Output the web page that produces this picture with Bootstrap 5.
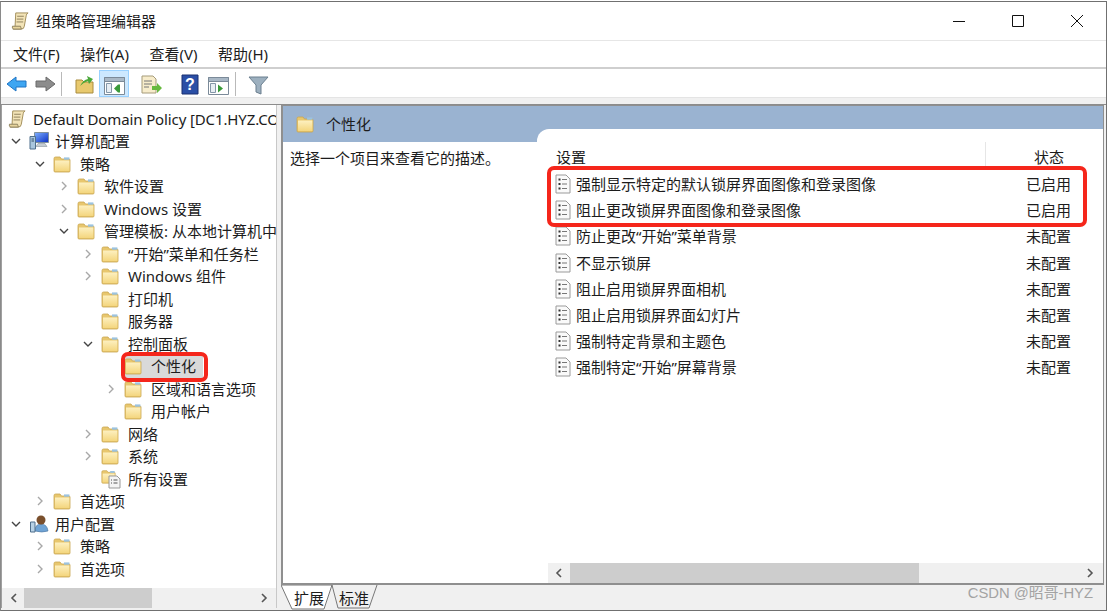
<!DOCTYPE html>
<html lang="zh-CN">
<head>
<meta charset="utf-8">
<title>组策略管理编辑器</title>
<link href="https://cdn.jsdelivr.net/npm/bootstrap@5.3.0/dist/css/bootstrap.min.css" rel="stylesheet">
<style>
html,body{height:100%;margin:0;overflow:hidden;background:#fff}
body{font-family:"Noto Sans","Noto Sans CJK SC",sans-serif;font-size:15px;color:#1c1c1c;line-height:1.2}
.gwin{height:610px;width:1107px;margin-top:1px;border:1px solid #707070;border-left-color:#8a8a8a;position:relative;background:#fff}
.gtitle{height:39px;padding-left:10px;border-bottom:1px solid #e6e6e6;flex:none}
.gwinbtns{margin-left:auto}
.gwinbtn{width:59px;height:38px}
.gmenu{height:28px;flex:none;padding:0 0 1px 12px;gap:20.5px;border-bottom:2px solid #cfcfcf}
.gtool{height:28px;flex:none;position:relative}
.gtool svg{position:absolute;top:6px}
.gsep{position:absolute;top:3px;height:24px;width:1px;background:#b9b9b9}
.gact{position:absolute;left:98px;top:1px;width:30px;height:27px;background:#cce8ff;border:1px solid #99d1ff}
.gstrip{height:7px;flex:none;background:#f0f0f0;border-top:1px solid #e4e4e4}
.gmain{flex:1 1 auto;min-height:0;background:#f0f0f0;border-top:1px solid #8c8c8c}
.gleft{width:276px;flex:none;background:#fff;border-left:1px solid #a0a0a0;border-right:1px solid #c8c8c8;margin-bottom:2px}
.gtree{flex:1 1 auto;min-height:0;overflow:hidden;padding-top:2.5px;padding-left:1px}
.grow{height:22.5px;white-space:nowrap;position:relative}
.gcv{width:10px;height:10px;flex:none;margin-right:8px}
.gic{flex:none;margin-right:6px}
.gtx{margin-left:3px;position:relative}
.lv0{padding-left:8px}
.lv1{padding-left:32px}
.lv2{padding-left:56px}
.lv3{padding-left:80px}
.lv4{padding-left:103px}
.groot{padding-left:5px;letter-spacing:-.12px}
.gsb{height:20px;background:#f0f0f0;flex:none;position:relative}
.gsb i{position:absolute;top:0;bottom:0;background:#cdcdcd}
.gsb svg{position:absolute;top:5px}
.gright{margin-left:4px;width:823px;flex:none}
.gpane{flex:1 1 auto;min-height:0;background:#fff;border:2px solid #8f8f8f;border-top-width:1px;border-right-width:1px}
.ghead{height:36px;background:#9ab3d1;flex:none;padding:0 0 0 13px}
.ghead span{margin-left:12px}
.gbody{flex:1 1 auto;min-height:0}
.gdesc{width:254px;flex:none;padding:7px 0 0 7px}
.gpanel{flex:1 1 auto;min-width:0;margin-top:-13px;background:#fff;border-top-left-radius:12px}
.gcols{height:42px;flex:none;padding:19px 0 0 19px;position:relative}
.gcols .gst{position:absolute;left:497px;top:19px}
.gcols b{position:absolute;left:448px;top:13px;height:28px;width:1px;background:#e6e6e6}
.gitems{flex:1 1 auto;min-height:0;padding-left:18px}
.gitem{height:26.2px;position:relative}
.gitem svg{margin-right:5px;flex:none}
.gstat{position:absolute;left:471px}
.gpanel .gsb{margin-left:11px}
.gtabs{height:25px;flex:none;position:relative;padding-left:13px;gap:15px}
.gtabs svg{position:absolute;left:0;top:0}
.gtabs span{position:relative}
.gmark{position:absolute;color:#a3a3a3;font-family:"Liberation Sans","Noto Sans CJK SC",sans-serif;font-size:14.8px;right:13px;top:583px}
.gred{position:absolute;border:4px solid #f5261b;border-radius:7px}
.gr1{left:546px;top:164px;width:540px;height:61px}
.gr2{left:120px;top:350px;width:87px;height:30px}
.gsel{position:absolute;left:120px;top:0;width:80px;height:22.5px;background:#d9d9d9}
.gup{position:relative}
</style>
</head>
<body>
<svg width="0" height="0" class="position-absolute">
<defs>
<linearGradient id="fg" x1="0" y1="0" x2="0" y2="1"><stop offset="0" stop-color="#fdf0c0"/><stop offset="1" stop-color="#f4d67e"/></linearGradient>
<linearGradient id="sg" x1="0" y1="0" x2="1" y2="1"><stop offset="0" stop-color="#7fb0ff"/><stop offset="1" stop-color="#0a2fc4"/></linearGradient>
<symbol id="fold" viewBox="0 0 18 18"><path d="M1 3.500Q1 2 2.500 2H7l1.500 2H16q1 0 1 1v11q0 1-1 1H2q-1 0-1-1z" fill="#e8c76e" stroke="#c9a650" stroke-width=".8"/><path d="M2 5.500h14.400V16H2z" fill="url(#fg)"/><path d="M11 2.400h5.400v2.300H11z" fill="#9cc3e0"/></symbol>
<symbol id="scroll" viewBox="0 0 20 20"><path d="M5 1.500h13q-2 1-2 3l-2 11q-.4 3-3 3H2q2-.8 2.300-3z" fill="#f3e4b8" stroke="#a08c58"/><path d="M1.500 15.500h8.500q.5 2 1 3H2.500q-1.500-1-1-3zM6.500 5h7M6 8h7M5.800 11h7" fill="#e8d59c" stroke="#8d7f5c"/></symbol>
<symbol id="doc" viewBox="0 0 16 20"><path d="M1 1h10l4 4v14H1z" fill="#fafafa" stroke="#9a9a9a"/><path d="M3.500 5.500h2M3.500 10h2M3.500 14.500h2" stroke="#333" stroke-width="2"/><path d="M7 5.500h5M7 10h5M7 14.500h5" stroke="#777"/></symbol>
<symbol id="cr" viewBox="0 0 10 10"><path d="M3 1l4 4-4 4" fill="none" stroke="#a8a8a8" stroke-width="1.400"/></symbol>
<symbol id="cd" viewBox="0 0 10 10"><path d="M1 3l4 4 4-4" fill="none" stroke="#444" stroke-width="1.400"/></symbol>
<symbol id="win" viewBox="0 0 21 18"><path d="M.5 .5h20v17H.5z" fill="#fff" stroke="#7b8a99"/><path d="M.5 .5h20v4H.5z" fill="#a9b8c6" stroke="#7b8a99"/><path d="M2.500 6.500h5v9h-5z" fill="#e8eef3" stroke="#8497a8"/></symbol>
</defs>
</svg>
<div class="gwin d-flex flex-column">
  <div class="gtitle d-flex align-items-center">
    <svg class="gic" width="19" height="20"><use href="#scroll"/></svg><span>组策略管理编辑器</span>
    <div class="gwinbtns d-flex">
      <div class="gwinbtn d-flex align-items-center justify-content-center"><svg width="12" height="12"><path d="M0 6.500h12" stroke="#111"/></svg></div>
      <div class="gwinbtn d-flex align-items-center justify-content-center"><svg width="12" height="12"><path d="M.5.500h11v11H.5z" fill="none" stroke="#111"/></svg></div>
      <div class="gwinbtn d-flex align-items-center justify-content-center"><svg width="12" height="12"><path d="M0 0l12 12M12 0L0 12" stroke="#111"/></svg></div>
    </div>
  </div>
  <div class="gmenu d-flex align-items-center"><span>文件(F)</span><span>操作(A)</span><span>查看(V)</span><span>帮助(H)</span></div>
  <div class="gtool">
    <svg style="left:5px" width="21" height="18"><path d="M1 9l9-7v4h10v6H10v4z" fill="#3ea6f2" stroke="#1f74c4"/></svg>
    <svg style="left:34px" width="21" height="18"><path d="M20 9l-9-7v4H1v6h10v4z" fill="#8c8c8c" stroke="#6a6a6a"/></svg>
    <i class="gsep" style="left:60px"></i>
    <svg style="left:74px" width="19" height="19"><path d="M1 5h6l2 2h9v11H1z" fill="#e8c96e" stroke="#a98c3e"/><path d="M5 11q3-6 8-7l-1-3 6 3-4 5-1-3q-4 1-8 5z" fill="#4aa83a"/></svg>
    <i class="gact"></i>
    <svg style="left:103px;top:8px" width="21" height="18"><use href="#win"/><path d="M16 7.500h-2l-4 4 4 4h2z" fill="#3a9a3a"/></svg>
    <svg style="left:140px" width="22" height="20"><path d="M1 1h11l3 3v14H1z" fill="#f7eccb" stroke="#a59b7a"/><path d="M3 6h8M3 9h8M3 12h5" stroke="#777"/><path d="M11 11h5V8l5 5-5 5v-3h-5z" fill="#67b93e"/></svg>
    <svg style="left:180px;top:5px" width="18" height="21"><path d="M1 1h16v19H1z" fill="#2a4fa6" stroke="#1a3170"/><text x="9" y="16" text-anchor="middle" font-size="16" font-weight="700" font-family="Liberation Sans" fill="#fff">?</text></svg>
    <svg style="left:207px;top:8px" width="21" height="18"><use href="#win"/><path d="M10 7.500v8l5-4z" fill="#3a9a3a"/></svg>
    <i class="gsep" style="left:234px"></i>
    <svg style="left:247px;top:7px" width="21" height="19"><path d="M1 1h19l-7 8v9l-5-2V9z" fill="#9db0bf" stroke="#6b7f8f"/></svg>
  </div>
  <div class="gstrip"></div>
  <div class="gmain d-flex">
    <div class="gleft d-flex flex-column">
      <div class="gtree">
        <div class="grow d-flex align-items-center groot"><svg class="gic" width="19" height="20"><use href="#scroll"/></svg><span>Default Domain Policy [DC1.HYZ.CO</span></div>
        <div class="grow d-flex align-items-center lv0"><svg class="gcv"><use href="#cd"/></svg><svg class="gic" width="20" height="20"><path d="M5.500 1.500h14v10h-14z" fill="url(#sg)" stroke="#7f8f9c"/><path d="M9 12.500h7l2 3H7z" fill="#c4ccd2" stroke="#8a96a0" stroke-width=".6"/><path d="M1 5.500h5.500v12.500H1z" fill="#a9c6dd" stroke="#4f6f8c"/><path d="M2.500 8h2.500M2.500 10h2.500" stroke="#35506a"/></svg><span>计算机配置</span></div>
        <div class="grow d-flex align-items-center lv1"><svg class="gcv"><use href="#cd"/></svg><svg class="gic" width="18" height="18"><use href="#fold"/></svg><span class="gtx">策略</span></div>
        <div class="grow d-flex align-items-center lv2"><svg class="gcv"><use href="#cr"/></svg><svg class="gic" width="18" height="18"><use href="#fold"/></svg><span class="gtx">软件设置</span></div>
        <div class="grow d-flex align-items-center lv2"><svg class="gcv"><use href="#cr"/></svg><svg class="gic" width="18" height="18"><use href="#fold"/></svg><span class="gtx">Windows 设置</span></div>
        <div class="grow d-flex align-items-center lv2"><svg class="gcv"><use href="#cd"/></svg><svg class="gic" width="18" height="18"><use href="#fold"/></svg><span class="gtx">管理模板: 从本地计算机中</span></div>
        <div class="grow d-flex align-items-center lv3"><svg class="gcv"><use href="#cr"/></svg><svg class="gic" width="18" height="18"><use href="#fold"/></svg><span class="gtx">“开始”菜单和任务栏</span></div>
        <div class="grow d-flex align-items-center lv3"><svg class="gcv"><use href="#cr"/></svg><svg class="gic" width="18" height="18"><use href="#fold"/></svg><span class="gtx">Windows 组件</span></div>
        <div class="grow d-flex align-items-center lv3"><span class="gcv"></span><svg class="gic" width="18" height="18"><use href="#fold"/></svg><span class="gtx">打印机</span></div>
        <div class="grow d-flex align-items-center lv3"><span class="gcv"></span><svg class="gic" width="18" height="18"><use href="#fold"/></svg><span class="gtx">服务器</span></div>
        <div class="grow d-flex align-items-center lv3"><svg class="gcv"><use href="#cd"/></svg><svg class="gic" width="18" height="18"><use href="#fold"/></svg><span class="gtx">控制面板</span></div>
        <div class="grow d-flex align-items-center lv4"><i class="gsel"></i><span class="gcv"></span><svg class="gic gup" width="18" height="18"><use href="#fold"/></svg><span class="gtx">个性化</span></div>
        <div class="grow d-flex align-items-center lv4"><svg class="gcv"><use href="#cr"/></svg><svg class="gic" width="18" height="18"><use href="#fold"/></svg><span class="gtx">区域和语言选项</span></div>
        <div class="grow d-flex align-items-center lv4"><span class="gcv"></span><svg class="gic" width="18" height="18"><use href="#fold"/></svg><span class="gtx">用户帐户</span></div>
        <div class="grow d-flex align-items-center lv3"><svg class="gcv"><use href="#cr"/></svg><svg class="gic" width="18" height="18"><use href="#fold"/></svg><span class="gtx">网络</span></div>
        <div class="grow d-flex align-items-center lv3"><svg class="gcv"><use href="#cr"/></svg><svg class="gic" width="18" height="18"><use href="#fold"/></svg><span class="gtx">系统</span></div>
        <div class="grow d-flex align-items-center lv3"><span class="gcv"></span><svg class="gic" width="20" height="20"><use href="#fold" width="15" height="15"/><path d="M8 7h8l3 3v9H8z" fill="#f4f4f4" stroke="#999"/><path d="M10 11h1M10 14h1M12.500 11h4M12.500 14h4" stroke="#555"/></svg><span class="gtx" style="margin-left:1px">所有设置</span></div>
        <div class="grow d-flex align-items-center lv1"><svg class="gcv"><use href="#cr"/></svg><svg class="gic" width="18" height="18"><use href="#fold"/></svg><span class="gtx">首选项</span></div>
        <div class="grow d-flex align-items-center lv0"><svg class="gcv"><use href="#cd"/></svg><svg class="gic" width="20" height="20"><path d="M6 17q0-7 6-7t7 7q-6 2-13 0z" fill="#6fa3d4" stroke="#44719c" stroke-width=".6"/><circle cx="12" cy="6" r="4.500" fill="#7a4f2c"/><path d="M1.500 8h4.500v10H1.500z" fill="#b8d2e6" stroke="#4f6f8c"/></svg><span>用户配置</span></div>
        <div class="grow d-flex align-items-center lv1"><svg class="gcv"><use href="#cr"/></svg><svg class="gic" width="18" height="18"><use href="#fold"/></svg><span class="gtx">策略</span></div>
        <div class="grow d-flex align-items-center lv1"><svg class="gcv"><use href="#cr"/></svg><svg class="gic" width="18" height="18"><use href="#fold"/></svg><span class="gtx">首选项</span></div>
      </div>
      <div class="gsb"><i style="left:22px;width:128px"></i><svg style="left:7px" width="10" height="10"><path d="M7 1L3 5l4 4" fill="none" stroke="#555" stroke-width="1.600"/></svg><svg style="left:257px" width="10" height="10"><path d="M3 1l4 4-4 4" fill="none" stroke="#555" stroke-width="1.600"/></svg></div>
    </div>
    <div class="gright d-flex flex-column">
      <div class="gpane d-flex flex-column">
        <div class="ghead d-flex align-items-center"><svg width="18" height="18"><use href="#fold"/></svg><span>个性化</span></div>
        <div class="gbody d-flex">
          <div class="gdesc">选择一个项目来查看它的描述。</div>
          <div class="gpanel d-flex flex-column">
            <div class="gcols"><span>设置</span><b></b><span class="gst">状态</span></div>
            <div class="gitems">
              <div class="gitem d-flex align-items-center"><svg width="16" height="20"><use href="#doc"/></svg><span>强制显示特定的默认锁屏界面图像和登录图像</span><span class="gstat">已启用</span></div>
              <div class="gitem d-flex align-items-center"><svg width="16" height="20"><use href="#doc"/></svg><span>阻止更改锁屏界面图像和登录图像</span><span class="gstat">已启用</span></div>
              <div class="gitem d-flex align-items-center"><svg width="16" height="20"><use href="#doc"/></svg><span>防止更改“开始”菜单背景</span><span class="gstat">未配置</span></div>
              <div class="gitem d-flex align-items-center"><svg width="16" height="20"><use href="#doc"/></svg><span>不显示锁屏</span><span class="gstat">未配置</span></div>
              <div class="gitem d-flex align-items-center"><svg width="16" height="20"><use href="#doc"/></svg><span>阻止启用锁屏界面相机</span><span class="gstat">未配置</span></div>
              <div class="gitem d-flex align-items-center"><svg width="16" height="20"><use href="#doc"/></svg><span>阻止启用锁屏界面幻灯片</span><span class="gstat">未配置</span></div>
              <div class="gitem d-flex align-items-center"><svg width="16" height="20"><use href="#doc"/></svg><span>强制特定背景和主题色</span><span class="gstat">未配置</span></div>
              <div class="gitem d-flex align-items-center"><svg width="16" height="20"><use href="#doc"/></svg><span>强制特定“开始”屏幕背景</span><span class="gstat">未配置</span></div>
            </div>
            <div class="gsb"><i style="left:22px;width:349px"></i><svg style="left:6px" width="10" height="10"><path d="M7 1L3 5l4 4" fill="none" stroke="#555" stroke-width="1.600"/></svg><svg style="left:537px" width="10" height="10"><path d="M3 1l4 4-4 4" fill="none" stroke="#555" stroke-width="1.600"/></svg></div>
          </div>
        </div>
      </div>
      <div class="gtabs d-flex align-items-center">
        <svg width="110" height="25"><path d="M0 0l11 24h32l8-24z" fill="#fff" stroke="#777"/><path d="M51 0l6 23h31l8-23" fill="none" stroke="#777"/></svg>
        <span>扩展</span><span>标准</span>
      </div>
    </div>
  </div>
  <div class="gmark">CSDN @昭哥-HYZ</div>
  <div class="gred gr1"></div>
  <div class="gred gr2"></div>
</div>
<script src="https://cdn.jsdelivr.net/npm/bootstrap@5.3.0/dist/js/bootstrap.bundle.min.js"></script>
</body>
</html>
